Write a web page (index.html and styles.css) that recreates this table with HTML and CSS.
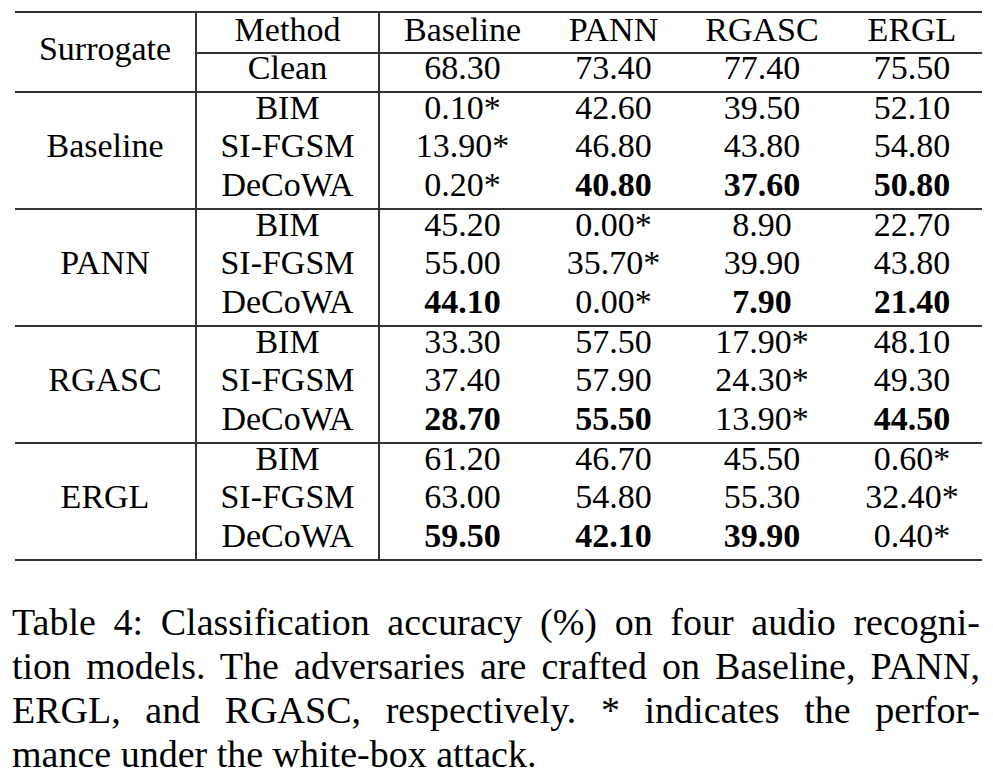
FILE: index.html
```html
<!DOCTYPE html>
<html>
<head>
<meta charset="utf-8">
<link rel="stylesheet" href="styles.css">
</head>
<body>
<figure class="figure">
  <table class="results">
    <colgroup>
      <col class="w-sur"><col class="w-meth"><col class="w-base"><col class="w-pann"><col class="w-rgasc"><col class="w-ergl">
    </colgroup>
    <thead>
      <tr class="head">
        <th rowspan="2" class="sur">Surrogate</th>
        <th class="meth hb">Method</th>
        <th class="hb">Baseline</th>
        <th class="hb">PANN</th>
        <th class="hb">RGASC</th>
        <th class="hb">ERGL</th>
      </tr>
      <tr>
        <td class="meth">Clean</td><td>68.30</td><td>73.40</td><td>77.40</td><td>75.50</td>
      </tr>
    </thead>
    <tbody>
      <tr><td rowspan="3" class="sur">Baseline</td><td class="meth">BIM</td><td>0.10*</td><td>42.60</td><td>39.50</td><td>52.10</td></tr>
      <tr><td class="meth">SI-FGSM</td><td>13.90*</td><td>46.80</td><td>43.80</td><td>54.80</td></tr>
      <tr><td class="meth">DeCoWA</td><td>0.20*</td><td><b>40.80</b></td><td><b>37.60</b></td><td><b>50.80</b></td></tr>
    </tbody>
    <tbody>
      <tr><td rowspan="3" class="sur">PANN</td><td class="meth">BIM</td><td>45.20</td><td>0.00*</td><td>8.90</td><td>22.70</td></tr>
      <tr><td class="meth">SI-FGSM</td><td>55.00</td><td>35.70*</td><td>39.90</td><td>43.80</td></tr>
      <tr><td class="meth">DeCoWA</td><td><b>44.10</b></td><td>0.00*</td><td><b>7.90</b></td><td><b>21.40</b></td></tr>
    </tbody>
    <tbody>
      <tr><td rowspan="3" class="sur">RGASC</td><td class="meth">BIM</td><td>33.30</td><td>57.50</td><td>17.90*</td><td>48.10</td></tr>
      <tr><td class="meth">SI-FGSM</td><td>37.40</td><td>57.90</td><td>24.30*</td><td>49.30</td></tr>
      <tr><td class="meth">DeCoWA</td><td><b>28.70</b></td><td><b>55.50</b></td><td>13.90*</td><td><b>44.50</b></td></tr>
    </tbody>
    <tbody>
      <tr><td rowspan="3" class="sur">ERGL</td><td class="meth">BIM</td><td>61.20</td><td>46.70</td><td>45.50</td><td>0.60*</td></tr>
      <tr><td class="meth">SI-FGSM</td><td>63.00</td><td>54.80</td><td>55.30</td><td>32.40*</td></tr>
      <tr><td class="meth">DeCoWA</td><td><b>59.50</b></td><td><b>42.10</b></td><td><b>39.90</b></td><td>0.40*</td></tr>
    </tbody>
  </table>
  <figcaption class="caption">
    <span class="cap-line">Table 4: Classification accuracy (%) on four audio recogni-</span>
    <span class="cap-line">tion models. The adversaries are crafted on Baseline, PANN,</span>
    <span class="cap-line">ERGL, and RGASC, respectively. * indicates the perfor-</span>
    <span class="cap-line cap-last">mance under the white-box attack.</span>
  </figcaption>
</figure>
</body>
</html>
```
FILE: styles.css
```css
html, body {
  margin: 0;
  padding: 0;
  background: #ffffff;
}

body {
  font-family: "Liberation Serif", "Times New Roman", serif;
  color: #000;
}

.figure {
  margin: 0;
  padding: 11px 0 0 12px;
  width: 968px;
}

.results {
  margin-left: 3px;
  border-collapse: collapse;
  table-layout: fixed;
  width: 967px;
  font-size: 34px;
  border-top: 2px solid #333;
  border-bottom: 2px solid #333;
}

.w-sur { width: 181px; }
.w-meth { width: 183px; }
.w-base { width: 166px; }
.w-pann { width: 137px; }
.w-rgasc { width: 160px; }
.w-ergl { width: 140px; }

.results th,
.results td {
  font-weight: normal;
  text-align: center;
  vertical-align: middle;
  white-space: nowrap;
  line-height: 28px;
  padding: 0 0 9px 0;
  border: none;
}

.results b {
  font-weight: bold;
}

.results tr {
  height: 39px;
}

.results tr.head {
  height: 41px;
}

.results tr.head th {
  padding-bottom: 6px;
}

.results th.sur,
.results td.sur {
  border-right: 2px solid #333;
  padding-bottom: 10px;
}

.results .meth {
  border-right: 2px solid #333;
}

.results th.hb {
  border-bottom: 2px solid #333;
}

.results tbody {
  border-top: 2px solid #333;
}

.caption {
  margin-top: 39px;
  font-size: 38px;
  line-height: 44px;
}

.cap-line {
  display: block;
  text-align: justify;
  text-align-last: justify;
}

.cap-line.cap-last {
  text-align: left;
  text-align-last: left;
}
```
